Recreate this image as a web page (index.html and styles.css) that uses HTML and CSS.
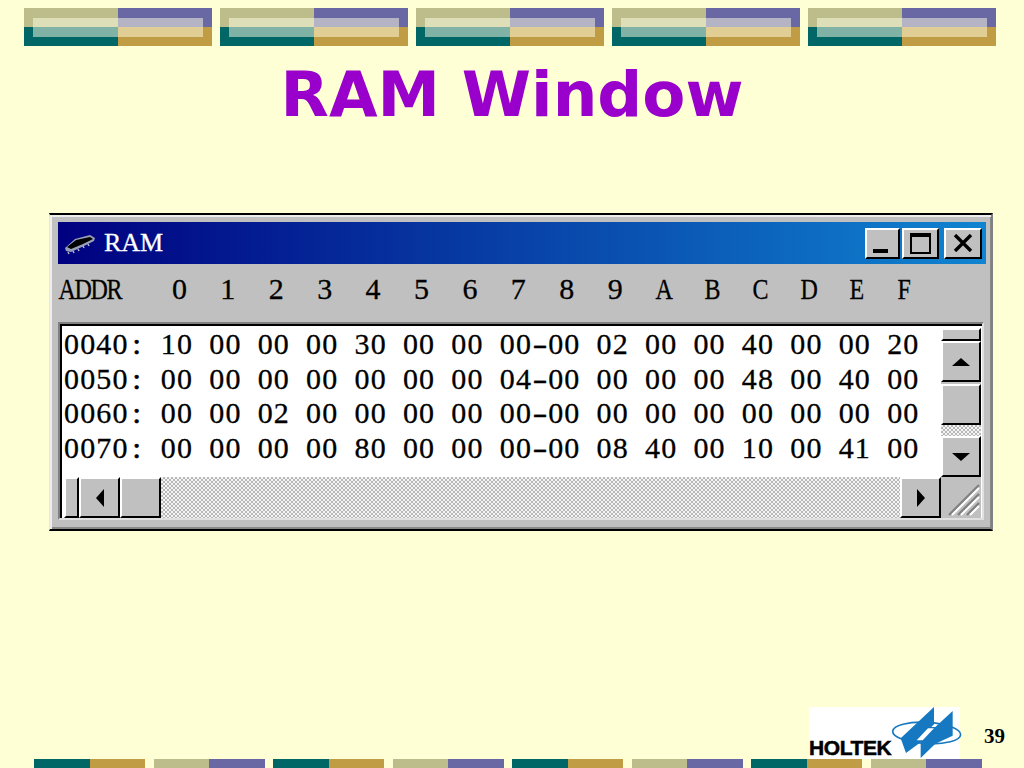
FILE: index.html
```html
<!DOCTYPE html>
<html lang="en">
<head>
<meta charset="utf-8">
<title>RAM Window</title>
<link rel="stylesheet" href="styles.css">
</head>
<body>
<div class="slide">
  <div class="topband">
    <div class="tile"><i class="q kh"></i><i class="q pu"></i><i class="q te"></i><i class="q go"></i><b class="glow"></b></div>
    <div class="tile"><i class="q kh"></i><i class="q pu"></i><i class="q te"></i><i class="q go"></i><b class="glow"></b></div>
    <div class="tile"><i class="q kh"></i><i class="q pu"></i><i class="q te"></i><i class="q go"></i><b class="glow"></b></div>
    <div class="tile"><i class="q kh"></i><i class="q pu"></i><i class="q te"></i><i class="q go"></i><b class="glow"></b></div>
    <div class="tile"><i class="q kh"></i><i class="q pu"></i><i class="q te"></i><i class="q go"></i><b class="glow"></b></div>
  </div>

  <h1 class="title">RAM Window</h1>

  <div class="window">
    <div class="titlebar">
      <svg class="chip" width="36" height="24" viewBox="0 0 36 24">
        <path d="M3 17 L13 8 L28 4 L33 7 L32 10 L22 15 L9 21 L4 20 Z" fill="#9a9fb8"/>
        <path d="M5 16 L14 9 L28 6 L31 8 L21 13 L9 18 Z" fill="#000"/>
        <path d="M6 21 L7 23 M11 20 L12 22 M16 18 L17 20 M21 15 L22 17 M26 13 L27 15" stroke="#b8b8d0" stroke-width="1.5"/>
      </svg>
      <span class="caption">RAM</span>
      <div class="controls">
        <span class="cbtn min"><i></i></span>
        <span class="cbtn max"><i></i></span>
        <span class="cbtn close">
          <svg width="22" height="18" viewBox="0 0 22 18"><path d="M3 1 L19 17 M19 1 L3 17" stroke="#000" stroke-width="3.4"/></svg>
        </span>
      </div>
    </div>

    <div class="colhead cells"><span class="l">A</span><span class="l">D</span><span class="l">D</span><span class="l">R</span>   0  1  2  3  4  5  6  7  8  9  <span class="l">A</span>  <span class="l">B</span>  <span class="l">C</span>  <span class="l">D</span>  <span class="l">E</span>  <span class="l">F</span></div>

    <div class="client">
      <div class="dump cells">
        <div class="row">0040<span class="p">:</span> 10 00 00 00 30 00 00 00<span class="p dash">-</span>00 02 00 00 40 00 00 20</div>
        <div class="row">0050<span class="p">:</span> 00 00 00 00 00 00 00 04<span class="p dash">-</span>00 00 00 00 48 00 40 00</div>
        <div class="row">0060<span class="p">:</span> 00 00 02 00 00 00 00 00<span class="p dash">-</span>00 00 00 00 00 00 00 00</div>
        <div class="row">0070<span class="p">:</span> 00 00 00 00 80 00 00 00<span class="p dash">-</span>00 08 40 00 10 00 41 00</div>
      </div>
      <div class="vbar">
        <span class="sb vstub"></span>
        <span class="sb vbtn"><i class="tri up"></i></span>
        <span class="sb vthumb"></span>
        <span class="track"></span>
        <span class="sb vbtn"><i class="tri down"></i></span>
      </div>
      <div class="hbar">
        <span class="sb hstub"></span>
        <span class="sb hbtn"><i class="tri left"></i></span>
        <span class="sb hthumb"></span>
        <span class="track"></span>
        <span class="sb hbtn"><i class="tri right"></i></span>
      </div>
      <div class="grip">
        <svg width="40" height="40" viewBox="0 0 40 40">
          <path d="M8 38 L38 8 M17 38 L38 17 M26 38 L38 26" stroke="#808080" stroke-width="2.4"/>
          <path d="M11 38 L38 11 M20 38 L38 20 M29 38 L38 29" stroke="#fff" stroke-width="2"/>
        </svg>
      </div>
    </div>
  </div>

  <div class="brandrow">
    <div class="logo">
      <span class="wordmark">HOLTEK</span>
      <svg class="mark" width="75" height="54" viewBox="0 12 225 162">
        <ellipse cx="110" cy="90" rx="102" ry="32" fill="none" stroke="#1578c0" stroke-width="5" transform="rotate(3 110 90)"/>
        <path d="M132 12 V64 L124 72 H136 L188 24 V98 L136 122 L92 165 V118 L48 150 L32 106 Z" fill="#1578c0"/>
        <path d="M80 112 L114 76 H132 L98 112 Z" fill="#fff"/>
      </svg>
    </div>
    <div class="pageno">39</div>
  </div>

  <div class="bottomband">
    <div class="seg"><i class="te"></i><i class="go"></i></div>
    <div class="seg"><i class="kh"></i><i class="pu"></i></div>
    <div class="seg"><i class="te"></i><i class="go"></i></div>
    <div class="seg"><i class="kh"></i><i class="pu"></i></div>
    <div class="seg"><i class="te"></i><i class="go"></i></div>
    <div class="seg"><i class="kh"></i><i class="pu"></i></div>
    <div class="seg"><i class="te"></i><i class="go"></i></div>
    <div class="seg"><i class="kh"></i><i class="pu"></i></div>
  </div>
</div>
</body>
</html>
```

FILE: styles.css
```css
* { box-sizing: border-box; }
html, body { margin: 0; padding: 0; }
body { background: #ffffd5; overflow: hidden; }

.slide {
  width: 1024px;
  height: 768px;
  display: flex;
  flex-direction: column;
}

.kh { background: #bdbd8c; }
.pu { background: #6a68a4; }
.te { background: #006666; }
.go { background: #c09c45; }

/* top band */
.topband {
  display: flex;
  gap: 8px;
  padding: 8px 0 0 24px;
}
.tile {
  position: relative;
  width: 188px;
  height: 38px;
  display: grid;
  grid-template-columns: 94px 94px;
  grid-template-rows: 19px 19px;
}
.q { display: block; }
.glow {
  position: absolute;
  left: 9px;
  right: 9px;
  top: 10px;
  bottom: 9px;
  background: rgba(255, 255, 230, 0.5);
}

/* heading */
.title {
  margin: 0;
  height: 167px;
  padding-top: 11px;
  text-align: center;
  font-family: "DejaVu Sans", sans-serif;
  font-weight: 700;
  font-size: 62.8px;
  line-height: 76px;
  color: #9900cc;
}

/* window */
.window {
  width: 944px;
  height: 318px;
  margin-left: 49px;
  padding: 7px 5px 9px 8px;
  display: flex;
  flex-direction: column;
  background: #c0c0c0;
  border-top: 2px solid #000;
  border-left: 1px solid #e8e8d8;
  border-right: 2px solid #808080;
  border-bottom: 2px solid #000;
  box-shadow: inset 2px 2px 0 #eee, inset -1px -2px 0 #888;
}
.titlebar {
  height: 42px;
  flex: none;
  display: flex;
  align-items: center;
  padding: 0 4px 0 4px;
  background: linear-gradient(90deg, #000080, #1084d0);
}
.chip { flex: none; }
.caption {
  margin-left: 6px;
  font-family: "Liberation Serif", serif;
  font-size: 26px;
  color: #fff;
  -webkit-text-stroke: 0.3px #fff;
}
.controls {
  margin-left: auto;
  display: flex;
  align-items: center;
}
.cbtn {
  height: 31px;
  display: flex;
  background: #c0c0c0;
  border: 2px solid;
  border-color: #fff #000 #000 #fff;
}
.min { width: 35px; align-items: flex-end; justify-content: center; padding-bottom: 4px; }
.min i { display: block; width: 15px; height: 4px; background: #000; margin-right: 4px; }
.max { width: 37px; margin-left: 2px; align-items: center; justify-content: center; }
.max i { display: block; width: 21px; height: 21px; border: 2px solid #000; border-top-width: 4px; }
.close { width: 38px; margin-left: 5px; align-items: center; justify-content: center; }

/* character-cell text: digits and spaces all advance about 16.14px */
.cells {
  font-family: "Liberation Serif", serif;
  font-size: 30px;
  letter-spacing: 1.14px;
  word-spacing: 7.5px;
  color: #000;
  -webkit-text-stroke: 0.3px #000;
}
.p, .l {
  display: inline-block;
  width: 16.14px;
  letter-spacing: 0;
  text-align: center;
}
.p { -webkit-text-stroke: 0.7px #000; }
.dash { transform: scaleX(1.5); -webkit-text-stroke: 0.3px #000; }
.l { transform: translateX(-2px) scaleX(0.8); -webkit-text-stroke: 0.3px #000; }

.colhead {
  height: 58px;
  flex: none;
  padding: 8px 0 0 1px;
  line-height: 34px;
  white-space: pre;
}

.client {
  flex: 1;
  min-height: 0;
  width: 926px;
  display: grid;
  grid-template-columns: 1fr 40px;
  grid-template-rows: 149px 41px;
  background: #fff;
  border: 2px solid;
  border-color: #808080 #e0e0e0 #e0e0e0 #808080;
  box-shadow: inset 2px 2px 0 #000;
  padding: 4px 1px 0 4px;
}
.dump { margin-top: -1px; }
.row { height: 34.7px; line-height: 34.7px; white-space: pre; }

.vbar, .hbar { display: flex; background: #c0c0c0; }
.vbar { flex-direction: column; }
.grip { background: #c0c0c0; }
.grip svg { display: block; }

.sb {
  display: flex;
  align-items: center;
  justify-content: center;
  flex: none;
  background: #c0c0c0;
  border: 2px solid;
  border-color: #fff #000 #000 #fff;
}
.track {
  flex: 1;
  background: repeating-conic-gradient(#b8b8b8 0 25%, #f4f4f4 0 50%) 0 0 / 4px 4px;
}
.vstub { height: 13px; }
.vbtn { height: 41px; }
.vthumb { height: 41px; margin-top: 2px; }
.hstub { width: 15px; }
.hbtn { width: 41px; }
.hthumb { width: 41px; }

.tri { display: block; width: 0; height: 0; border-style: solid; }
.up { border-width: 0 9px 8px; border-color: transparent transparent #000; }
.down { border-width: 8px 9px 0; border-color: #000 transparent transparent; }
.left { border-width: 9px 8px 9px 0; border-color: transparent #000 transparent transparent; }
.right { border-width: 9px 0 9px 8px; border-color: transparent transparent transparent #000; }

/* brand */
.brandrow {
  flex: 1;
  min-height: 0;
  display: flex;
  align-items: flex-end;
  padding-left: 809px;
}
.logo {
  width: 151px;
  height: 52px;
  display: flex;
  align-items: flex-end;
  background: #fff;
}
.wordmark {
  width: 84px;
  flex: none;
  font-family: "Liberation Sans", sans-serif;
  font-weight: 700;
  font-size: 21px;
  line-height: 22px;
  letter-spacing: -0.4px;
  color: #000;
  -webkit-text-stroke: 0.5px #000;
}
.mark { flex: none; margin-left: -3px; margin-bottom: -2px; }
.pageno {
  margin-left: 24px;
  margin-bottom: 11px;
  font-family: "Liberation Serif", serif;
  font-weight: 700;
  font-size: 21px;
  line-height: 24px;
  color: #000;
}

/* bottom band */
.bottomband {
  height: 9px;
  flex: none;
  display: flex;
  padding-left: 34px;
}
.seg { width: 111px; margin-right: 8.5px; display: flex; }
.seg i { display: block; flex: 1; }
```
